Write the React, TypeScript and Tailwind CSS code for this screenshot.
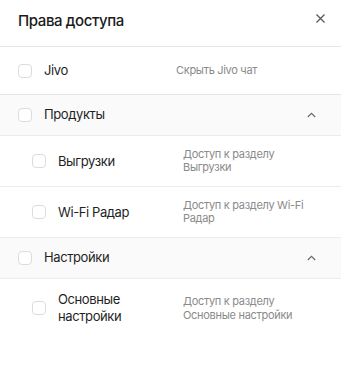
import React from "react";

const font = { fontFamily: "Inter, 'Noto Sans', sans-serif" };

function Box() {
  return <span className="block w-[14px] h-[14px] shrink-0 rounded-[4px] border border-[#dcdcdc] bg-white" />;
}

function Chevron() {
  return (
    <svg width="9" height="6" viewBox="0 0 9 6" className="text-[#6b6b6b]">
      <path d="M0.8 5 L4.5 1.3 L8.2 5" fill="none" stroke="currentColor" strokeWidth="1.2" />
    </svg>
  );
}

function SubRow({ label, desc }: { label: React.ReactNode; desc: React.ReactNode }) {
  return (
    <div className="flex items-center border-b border-[#ececec] pl-[32px] h-[51px]">
      <div className="flex items-center w-[151px] shrink-0">
        <Box />
        <span className="ml-[12px] text-[13px] leading-[17px] tracking-[-0.4px] text-[#1f1f1f] w-[100px]">{label}</span>
      </div>
      <div className="text-[11px] leading-[13px] tracking-[-0.3px] text-[#8a8a8a] w-[128px]">{desc}</div>
    </div>
  );
}

function Section({ title }: { title: string }) {
  return (
    <div className="flex items-center h-[41px] bg-[#fafafa] border-b border-[#ececec] pl-[18px] pr-[25px]">
      <Box />
      <span className="ml-[12px] text-[13px] tracking-[-0.4px] text-[#1f1f1f] flex-1">{title}</span>
      <Chevron />
    </div>
  );
}

export default function App() {
  return (
    <div className="w-[356px] h-[366px] bg-white" style={font}>
      <div className="w-[341px]">
        <div className="flex items-start justify-between h-[47px] border-b border-[#e6e6e6] pl-[18px] pr-[16px]">
          <span className="mt-[12px] text-[15px] leading-[18px] font-medium tracking-[-0.4px] text-[#1a1a1a]">Права доступа</span>
          <svg width="9" height="9" viewBox="0 0 9 9" className="mt-[14px] text-[#555]">
            <path d="M0.5 0.5 L8.5 8.5 M8.5 0.5 L0.5 8.5" stroke="currentColor" strokeWidth="1.2" />
          </svg>
        </div>
        <div className="flex items-center h-[48px] border-b border-[#e6e6e6] pl-[18px]">
          <div className="flex items-center w-[158px] shrink-0">
            <Box />
            <span className="ml-[12px] text-[13px] tracking-[-0.4px] text-[#1f1f1f]">Jivo</span>
          </div>
          <span className="text-[11px] tracking-[-0.3px] text-[#8a8a8a]">Скрыть Jivo чат</span>
        </div>
        <Section title="Продукты" />
        <SubRow label="Выгрузки" desc="Доступ к разделу Выгрузки" />
        <SubRow label="Wi-Fi Радар" desc="Доступ к разделу Wi-Fi Радар" />
        <Section title="Настройки" />
        <div className="flex items-center pl-[32px] pt-[12px] pb-[12px]">
          <div className="flex items-center w-[151px] shrink-0">
            <Box />
            <span className="ml-[12px] text-[13px] leading-[17px] tracking-[-0.4px] text-[#1f1f1f] w-[90px]">Основные настройки</span>
          </div>
          <div className="text-[11px] leading-[14px] tracking-[-0.3px] text-[#8a8a8a] w-[128px]">Доступ к разделу Основные настройки</div>
        </div>
      </div>
    </div>
  );
}
